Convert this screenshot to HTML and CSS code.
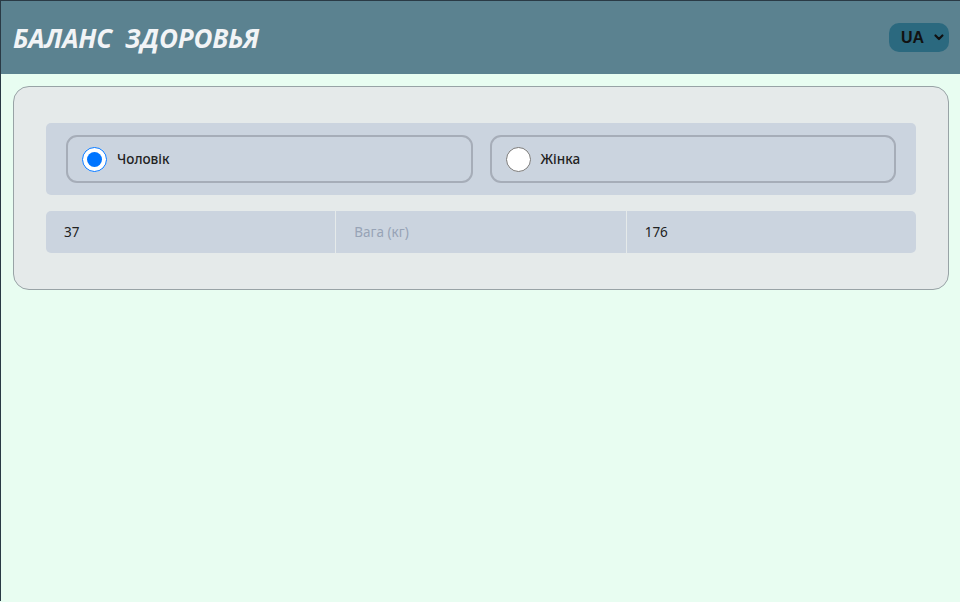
FILE: index.html
```html
<!DOCTYPE html>
<html lang="uk">
<head>
<meta charset="utf-8">
<title>Баланс здоровья</title>
<link rel="stylesheet" href="styles.css">
</head>
<body>
<header class="topbar">
  <h1 class="brand">БАЛАНС&nbsp;&nbsp;ЗДОРОВЬЯ</h1>
  <div class="lang">
    <span class="lang-code">UA</span>
    <svg class="lang-caret" width="10" height="7" viewBox="0 0 10 7"><path d="M1.5 1.5 L5 5 L8.5 1.5" fill="none" stroke="#111" stroke-width="2.2" stroke-linecap="round" stroke-linejoin="round"/></svg>
  </div>
</header>
<main class="content">
  <section class="card">
    <div class="gender">
      <label class="option">
        <input type="radio" name="sex" class="radio" checked>
        <span class="option-label">Чоловік</span>
      </label>
      <label class="option">
        <input type="radio" name="sex" class="radio">
        <span class="option-label">Жінка</span>
      </label>
    </div>
    <div class="fields">
      <div class="field">37</div>
      <div class="field placeholder">Вага (кг)</div>
      <div class="field">176</div>
    </div>
  </section>
</main>
</body>
</html>
```
FILE: styles.css
```css
html, body {
  margin: 0;
  padding: 0;
}
body {
  min-height: 601px;
  box-sizing: border-box;
  background: #e8fdf1;
  border-top: 1px solid #2a3a45;
  border-left: 1px solid #2a3a45;
  font-family: "Noto Sans", "Open Sans", sans-serif;
  color: #222;
}
.topbar {
  height: 73px;
  background: #5b8290;
  display: flex;
  align-items: center;
  justify-content: space-between;
  padding: 0 11px 0 12px;
}
.brand {
  margin: 0;
  font-family: "Open Sans", "Noto Sans", sans-serif;
  font-style: italic;
  font-weight: 700;
  font-size: 26px;
  color: #f2f4f6;
  letter-spacing: -0.2px;
}
.lang {
  width: 60px;
  height: 29px;
  box-sizing: border-box;
  background: #2b697f;
  border-radius: 10px;
  display: flex;
  align-items: center;
  padding: 0 5px 0 12px;
  gap: 10px;
}
.lang-code {
  font-family: "Liberation Sans", Arial, sans-serif;
  font-weight: 700;
  font-size: 16px;
  color: #111;
}
.content {
  padding: 12px 11px 0 12px;
}
.card {
  background: #e5eaea;
  border: 1px solid #98a3a6;
  border-radius: 16px;
  padding: 36px 32px 36px 32px;
}
.gender {
  background: #cbd4df;
  border-radius: 5px;
  padding: 12px 20px 12px 20px;
  display: flex;
  gap: 17px;
}
.option {
  flex: 1;
  height: 48px;
  box-sizing: border-box;
  border: 2px solid #a6adb8;
  border-radius: 11px;
  display: flex;
  align-items: center;
  padding-left: 14px;
  gap: 10px;
}
.radio {
  width: 25px;
  height: 25px;
  margin: 0;
}
.option-label {
  font-size: 13.5px;
  font-weight: 500;
  color: #222;
}
.fields {
  margin-top: 16px;
  display: flex;
  gap: 1px;
  border-radius: 5px;
  overflow: hidden;
  background: #e5eaea;
}
.field {
  flex: 1;
  height: 42px;
  background: #cbd4df;
  display: flex;
  align-items: center;
  padding-left: 18px;
  font-size: 13.5px;
  color: #222;
}
.placeholder {
  color: #97a3b6;
}
```
